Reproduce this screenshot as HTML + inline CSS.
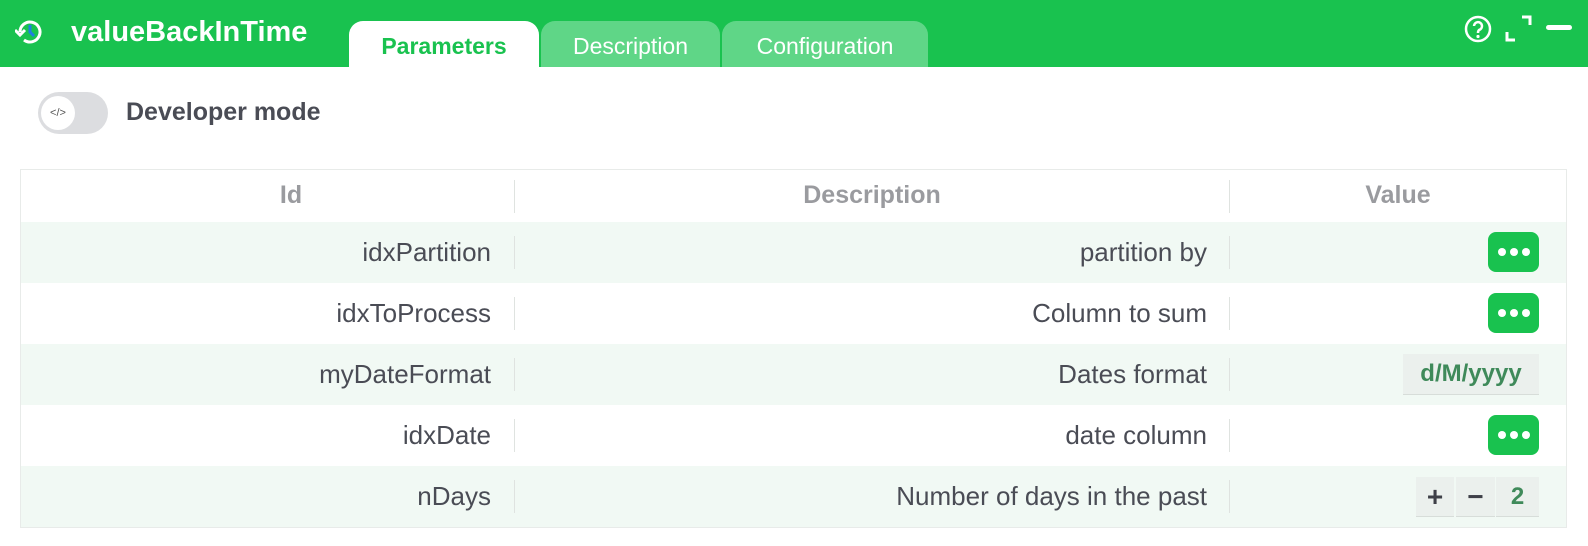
<!DOCTYPE html>
<html><head><meta charset="utf-8"><style>
*{margin:0;padding:0;box-sizing:border-box}
body{width:1588px;height:546px;background:#fff;font-family:"Liberation Sans",sans-serif;position:relative;overflow:hidden}
.hdr{position:absolute;left:0;top:0;width:1588px;height:67px;background:#19c24f}
.title{position:absolute;left:71px;top:16px;color:#fff;font-weight:bold;font-size:29px}
.tab{position:absolute;top:21px;height:46px;border-radius:14px 14px 0 0;font-size:23px;color:#fff;text-align:center;line-height:50px}
.t1{left:349px;width:190px;background:#fff;color:#19c24f;font-weight:bold}
.t2{left:541px;width:179px;background:#5fd687}
.t3{left:722px;width:206px;background:#5fd687}
.tog{position:absolute;left:38px;top:92px;width:70px;height:42px;border-radius:21px;background:#dcdde0}
.knob{position:absolute;left:3px;top:4px;width:34px;height:34px;border-radius:50%;background:#fff;font-size:11px;color:#555;text-align:center;line-height:34px}
.dev{position:absolute;left:126px;top:98px;font-size:25px;font-weight:bold;color:#4a4c55}
.tbl{position:absolute;left:20px;top:169px;width:1547px;height:359px;border:1px solid #e8ebe9}
.row{position:absolute;left:0;width:1545px;height:61px}
.alt{background:#f1f9f4}
.c{position:absolute;font-size:26px;color:#4a4c55;top:0;line-height:61px;text-align:right}
.id{left:0;width:470px}.ds{left:494px;width:692px}
.sep{position:absolute;top:14px;width:1px;height:33px;background:#dfe3e0}
.h{font-weight:bold;color:#9a9b9f;text-align:center;line-height:50px}
.btn{position:absolute;left:1467px;top:10px;width:51px;height:40px;background:#19c24f;border-radius:8px}
.btn i{position:absolute;top:16px;width:8px;height:8px;border-radius:50%;background:#fff}
.box{position:absolute;background:#ebf0ed;border-bottom:1px solid #d7ddd9;color:#3f8a5a;font-weight:bold;font-size:24px;text-align:center}
</style></head><body>
<div class="hdr">
<svg style="position:absolute;left:15px;top:18px" width="30" height="28" viewBox="0 0 30 28"><path d="M5 14 A10 10 0 1 1 9 22" fill="none" stroke="#fff" stroke-width="3"/><path d="M0 12 L5 17 L10 12" fill="none" stroke="#fff" stroke-width="3"/><path d="M15 7 V14 L19 18" fill="none" stroke="#1e7fe0" stroke-width="3"/></svg>
<div class="title">valueBackInTime</div>
<div class="tab t1">Parameters</div><div class="tab t2">Description</div><div class="tab t3">Configuration</div>
<svg style="position:absolute;left:1464px;top:15px" width="28" height="28" viewBox="0 0 28 28"><circle cx="14" cy="14" r="12" fill="none" stroke="#fff" stroke-width="2.5"/><path d="M10 11 A4 4 0 1 1 15 15 Q14 16 14 18" fill="none" stroke="#fff" stroke-width="2.5"/><circle cx="14" cy="21.5" r="1.6" fill="#fff"/></svg>
<div style="position:absolute;left:1505px;top:15px;width:28px;height:28px"><svg width="28" height="28" viewBox="0 0 28 28"><path d="M17 2 H25 V10 M2 17 V25 H10" fill="none" stroke="#fff" stroke-width="3"/></svg></div>
<div style="position:absolute;left:1546px;top:25px;width:26px;height:5px;border-radius:3px;background:#fff"></div>
</div>
<div class="tog"><div class="knob">&lt;/&gt;</div></div>
<div class="dev">Developer mode</div>
<div class="tbl">
<div class="row" style="top:0;height:52px">
<div class="c h" style="left:0;width:540px;font-size:25px;line-height:50px">Id</div><div class="sep" style="left:493px;top:10px"></div>
<div class="c h" style="left:494px;width:714px;font-size:25px;line-height:50px">Description</div><div class="sep" style="left:1208px;top:10px"></div>
<div class="c h" style="left:1209px;width:336px;font-size:25px;line-height:50px">Value</div></div>
<div class="row alt" style="top:52px"><div class="c id">idxPartition</div><div class="sep" style="left:493px"></div><div class="c ds">partition by</div><div class="sep" style="left:1208px"></div><div class="btn"><i style="left:10px"></i><i style="left:22px"></i><i style="left:34px"></i></div></div>
<div class="row" style="top:113px"><div class="c id">idxToProcess</div><div class="sep" style="left:493px"></div><div class="c ds">Column to sum</div><div class="sep" style="left:1208px"></div><div class="btn"><i style="left:10px"></i><i style="left:22px"></i><i style="left:34px"></i></div></div>
<div class="row alt" style="top:174px"><div class="c id">myDateFormat</div><div class="sep" style="left:493px"></div><div class="c ds">Dates format</div><div class="sep" style="left:1208px"></div><div class="box" style="left:1382px;top:10px;width:136px;height:41px;line-height:40px">d/M/yyyy</div></div>
<div class="row" style="top:235px"><div class="c id">idxDate</div><div class="sep" style="left:493px"></div><div class="c ds">date column</div><div class="sep" style="left:1208px"></div><div class="btn"><i style="left:10px"></i><i style="left:22px"></i><i style="left:34px"></i></div></div>
<div class="row alt" style="top:296px"><div class="c id">nDays</div><div class="sep" style="left:493px"></div><div class="c ds">Number of days in the past</div><div class="sep" style="left:1208px"></div>
<div class="box" style="left:1395px;top:11px;width:38px;height:40px;line-height:40px;color:#3e4048;font-size:28px">+</div>
<div class="box" style="left:1435px;top:11px;width:39px;height:40px;line-height:40px;color:#3e4048;font-size:28px">−</div>
<div class="box" style="left:1475px;top:11px;width:43px;height:40px;line-height:40px">2</div></div>
</div>
</body></html>
